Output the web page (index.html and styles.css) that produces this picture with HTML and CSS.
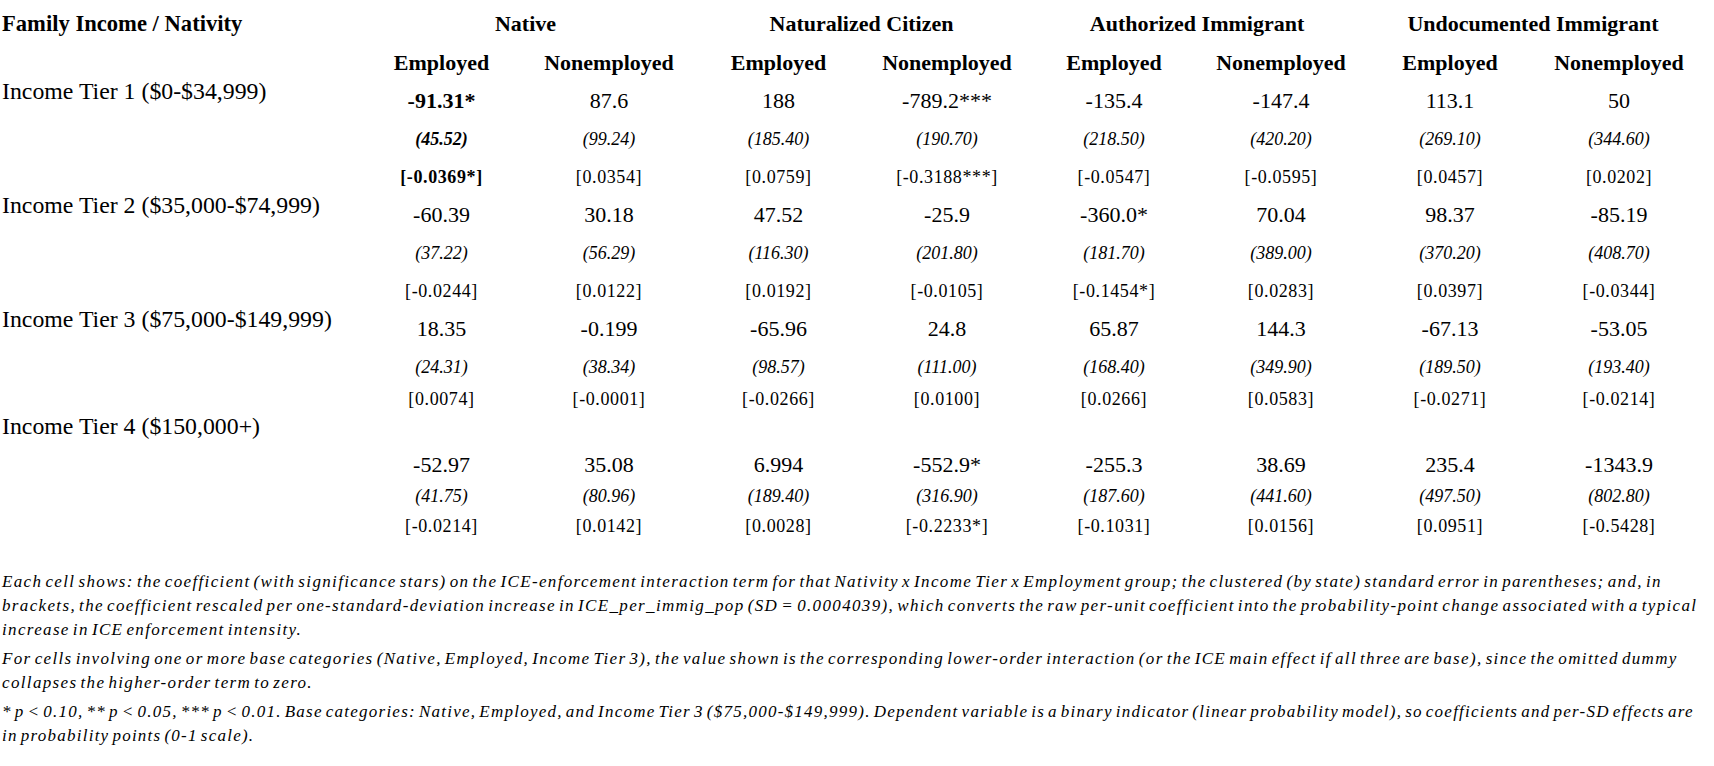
FILE: index.html
```html
<!DOCTYPE html>
<html lang="en">
<head>
<meta charset="utf-8">
<title>ICE enforcement interaction estimates</title>
<link rel="stylesheet" href="styles.css">
</head>
<body>
<main class="page">
<table class="results">
  <colgroup>
    <col class="col-label">
    <col class="col-a"><col class="col-b">
    <col class="col-c"><col class="col-d">
    <col class="col-e"><col class="col-f">
    <col class="col-g"><col class="col-h">
  </colgroup>
  <thead>
    <tr class="group-row">
      <th class="label-head">Family Income / Nativity</th>
      <th colspan="2">Native</th>
      <th colspan="2">Naturalized Citizen</th>
      <th colspan="2">Authorized Immigrant</th>
      <th colspan="2">Undocumented Immigrant</th>
    </tr>
    <tr class="sub-row">
      <th></th>
      <th>Employed</th><th>Nonemployed</th>
      <th>Employed</th><th>Nonemployed</th>
      <th>Employed</th><th>Nonemployed</th>
      <th>Employed</th><th>Nonemployed</th>
    </tr>
  </thead>
  <tbody>
    <tr class="coef">
      <td class="tier" rowspan="3">Income Tier 1 ($0-$34,999)</td>
      <td class="sig">-91.31*</td><td>87.6</td><td>188</td><td>-789.2***</td><td>-135.4</td><td>-147.4</td><td>113.1</td><td>50</td>
    </tr>
    <tr class="se">
      <td class="sig">(45.52)</td><td>(99.24)</td><td>(185.40)</td><td>(190.70)</td><td>(218.50)</td><td>(420.20)</td><td>(269.10)</td><td>(344.60)</td>
    </tr>
    <tr class="br">
      <td class="sig">[-0.0369*]</td><td>[0.0354]</td><td>[0.0759]</td><td>[-0.3188***]</td><td>[-0.0547]</td><td>[-0.0595]</td><td>[0.0457]</td><td>[0.0202]</td>
    </tr>

    <tr class="coef">
      <td class="tier" rowspan="3">Income Tier 2 ($35,000-$74,999)</td>
      <td>-60.39</td><td>30.18</td><td>47.52</td><td>-25.9</td><td>-360.0*</td><td>70.04</td><td>98.37</td><td>-85.19</td>
    </tr>
    <tr class="se">
      <td>(37.22)</td><td>(56.29)</td><td>(116.30)</td><td>(201.80)</td><td>(181.70)</td><td>(389.00)</td><td>(370.20)</td><td>(408.70)</td>
    </tr>
    <tr class="br">
      <td>[-0.0244]</td><td>[0.0122]</td><td>[0.0192]</td><td>[-0.0105]</td><td>[-0.1454*]</td><td>[0.0283]</td><td>[0.0397]</td><td>[-0.0344]</td>
    </tr>

    <tr class="coef">
      <td class="tier" rowspan="3">Income Tier 3 ($75,000-$149,999)</td>
      <td>18.35</td><td>-0.199</td><td>-65.96</td><td>24.8</td><td>65.87</td><td>144.3</td><td>-67.13</td><td>-53.05</td>
    </tr>
    <tr class="se">
      <td>(24.31)</td><td>(38.34)</td><td>(98.57)</td><td>(111.00)</td><td>(168.40)</td><td>(349.90)</td><td>(189.50)</td><td>(193.40)</td>
    </tr>
    <tr class="br br-tight">
      <td>[0.0074]</td><td>[-0.0001]</td><td>[-0.0266]</td><td>[0.0100]</td><td>[0.0266]</td><td>[0.0583]</td><td>[-0.0271]</td><td>[-0.0214]</td>
    </tr>

    <tr class="tier-row">
      <td class="tier tier-alone">Income Tier 4 ($150,000+)</td>
      <td colspan="8"></td>
    </tr>
    <tr class="coef compact">
      <td></td>
      <td>-52.97</td><td>35.08</td><td>6.994</td><td>-552.9*</td><td>-255.3</td><td>38.69</td><td>235.4</td><td>-1343.9</td>
    </tr>
    <tr class="se compact">
      <td></td>
      <td>(41.75)</td><td>(80.96)</td><td>(189.40)</td><td>(316.90)</td><td>(187.60)</td><td>(441.60)</td><td>(497.50)</td><td>(802.80)</td>
    </tr>
    <tr class="br compact">
      <td></td>
      <td>[-0.0214]</td><td>[0.0142]</td><td>[0.0028]</td><td>[-0.2233*]</td><td>[-0.1031]</td><td>[0.0156]</td><td>[0.0951]</td><td>[-0.5428]</td>
    </tr>
  </tbody>
</table>

<section class="notes">
  <p>Each cell shows: the coefficient (with significance stars) on the ICE-enforcement interaction term for that Nativity x Income Tier x Employment group; the clustered (by state) standard error in parentheses; and, in brackets, the coefficient rescaled per one-standard-deviation increase in ICE_per_immig_pop (SD = 0.0004039), which converts the raw per-unit coefficient into the probability-point change associated with a typical increase in ICE enforcement intensity.</p>
  <p>For cells involving one or more base categories (Native, Employed, Income Tier 3), the value shown is the corresponding lower-order interaction (or the ICE main effect if all three are base), since the omitted dummy collapses the higher-order term to zero.</p>
  <p class="key-note">* p &lt; 0.10, ** p &lt; 0.05, *** p &lt; 0.01. Base categories: Native, Employed, and Income Tier 3 ($75,000-$149,999). Dependent variable is a binary indicator (linear probability model), so coefficients and per-SD effects are in probability points (0-1 scale).</p>
</section>
</main>
</body>
</html>
```

FILE: styles.css
```css
html, body {
  margin: 0;
  padding: 0;
  background: #ffffff;
  color: #000000;
  font-family: "Liberation Serif", "Times New Roman", serif;
}

.page {
  width: 1714px;
}

.results {
  width: 1702px;
  table-layout: fixed;
  border-collapse: collapse;
  border-spacing: 0;
}

.col-label { width: 358px; }
.col-a { width: 167px; }
.col-b { width: 168px; }
.col-c { width: 171px; }
.col-d { width: 166px; }
.col-e { width: 168px; }
.col-f { width: 166px; }
.col-g { width: 172px; }
.col-h { width: 166px; }

.results th,
.results td {
  padding: 0;
  text-align: center;
  vertical-align: middle;
  white-space: nowrap;
}

.results th {
  font-weight: bold;
  font-size: 22px;
  line-height: 24px;
}

.group-row th {
  height: 40px;
  padding-top: 4px;
}

.sub-row th {
  height: 38px;
}

.results th.label-head {
  text-align: left;
  padding-left: 2px;
  font-size: 22.6px;
}

.results td.tier {
  text-align: left;
  vertical-align: top;
  padding-left: 2px;
  font-size: 23.8px;
  line-height: 18px;
}

.results td.tier-alone {
  padding-top: 5px;
}

.coef td {
  height: 38px;
  font-size: 22px;
  line-height: 22px;
}

.se td {
  height: 38px;
  font-size: 18px;
  line-height: 20px;
  font-style: italic;
}

.br td {
  height: 38px;
  font-size: 18px;
  line-height: 20px;
  letter-spacing: 0.6px;
}

.br-tight td {
  height: 26px;
}

.tier-row td {
  height: 33px;
}

.compact td {
  height: 30px;
}

.se.compact td {
  height: 31px;
}

.results td.sig {
  font-weight: bold;
}

.notes {
  margin-top: 29px;
  padding: 0 10px 0 2px;
  font-style: italic;
  font-size: 17px;
  line-height: 24px;
  letter-spacing: 1.35px;
  word-spacing: -2.5px;
}

.notes p {
  margin: 0 0 5px 0;
}

.notes p.key-note {
  letter-spacing: 1.25px;
}
```
